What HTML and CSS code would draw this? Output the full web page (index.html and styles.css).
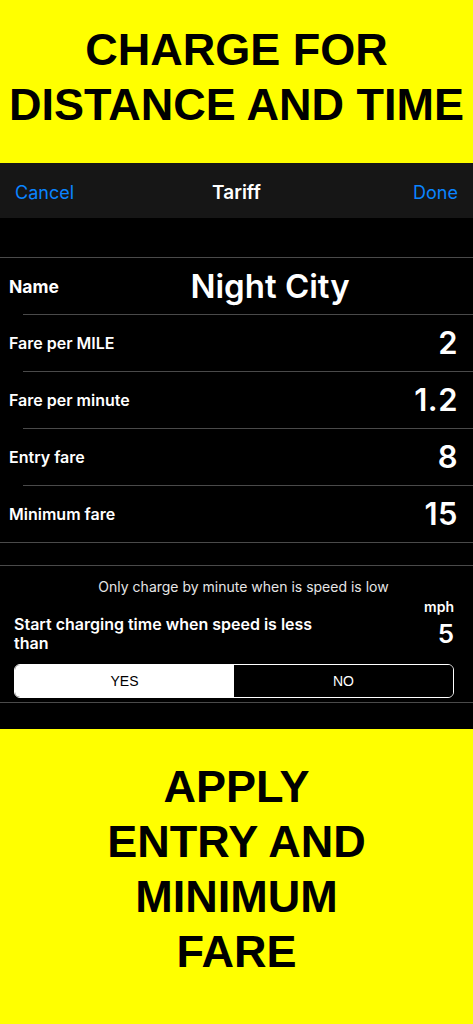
FILE: index.html
```html
<!DOCTYPE html>
<html lang="en">
<head>
    <meta charset="UTF-8">
    <meta name="viewport" content="width=device-width, initial-scale=1.0">
    <title>Tariff</title>
    <link rel="stylesheet" href="styles.css">
</head>
<body>
    <header class="banner banner-top">
        <h1>CHARGE FOR<br>DISTANCE AND TIME</h1>
    </header>

    <div class="screen">
        <nav class="navbar">
            <a class="nav-btn" href="#">Cancel</a>
            <span class="nav-title">Tariff</span>
            <a class="nav-btn nav-done" href="#">Done</a>
        </nav>

        <div class="table">
            <div class="row row-name">
                <span class="label">Name</span>
                <span class="name-value">Night City</span>
            </div>
            <div class="row">
                <span class="label">Fare per MILE</span>
                <span class="value">2</span>
            </div>
            <div class="row">
                <span class="label">Fare per minute</span>
                <span class="value">1.2</span>
            </div>
            <div class="row">
                <span class="label">Entry fare</span>
                <span class="value">8</span>
            </div>
            <div class="row">
                <span class="label">Minimum fare</span>
                <span class="value">15</span>
            </div>
        </div>

        <div class="speed">
            <p class="hint">Only charge by minute when is speed is low</p>
            <div class="speed-row">
                <span class="speed-label">Start charging time when speed is less than</span>
                <div class="speed-value">
                    <span class="unit">mph</span>
                    <span class="number">5</span>
                </div>
            </div>
            <div class="segmented">
                <button class="seg active">YES</button>
                <button class="seg">NO</button>
            </div>
        </div>
    </div>

    <footer class="banner banner-bottom">
        <h2>APPLY<br>ENTRY AND<br>MINIMUM<br>FARE</h2>
    </footer>
</body>
</html>
```

FILE: styles.css
```css
body {
    margin: 0;
    padding: 0;
    background-color: #000;
    font-family: Inter, "Noto Sans", sans-serif;
    color: #fff;
}
.banner {
    background-color: #ffff00;
    color: #000;
    text-align: center;
    font-family: "Liberation Sans", Arial, sans-serif;
    box-sizing: border-box;
}
.banner h1, .banner h2 {
    margin: 0;
    font-size: 45px;
    line-height: 55px;
    font-weight: bold;
}
.banner-top {
    height: 163px;
    padding-top: 22px;
}
.banner-bottom {
    height: 295px;
    padding-top: 30px;
}
.screen {
    padding-bottom: 26px;
}
.navbar {
    height: 55px;
    box-sizing: border-box;
    padding: 4px 15px 0;
    background-color: #161616;
    display: grid;
    grid-template-columns: 1fr auto 1fr;
    align-items: center;
}
.nav-btn {
    color: #0a84ff;
    text-decoration: none;
    font-size: 18px;
}
.nav-done {
    justify-self: end;
}
.nav-title {
    font-size: 19px;
    font-weight: 600;
}
.table {
    margin-top: 39px;
    border-top: 1px solid #4a4a4a;
    border-bottom: 1px solid #4a4a4a;
}
.row {
    height: 57px;
    display: flex;
    align-items: center;
    justify-content: space-between;
    padding: 0 15px 0 9px;
    background: linear-gradient(#4a4a4a, #4a4a4a) no-repeat 23px 0 / calc(100% - 23px) 1px;
}
.row-name {
    height: 56px;
    background: none;
}
.label {
    font-size: 16px;
    font-weight: 600;
}
.row-name .label {
    width: 73px;
    flex: none;
    font-size: 17.5px;
    font-weight: 700;
}
.name-value {
    flex: 1;
    text-align: center;
    font-size: 33px;
    font-weight: 600;
}
.value {
    font-size: 31px;
    font-weight: 600;
    letter-spacing: 0.5px;
}
.speed {
    margin-top: 22px;
    border-top: 1px solid #4a4a4a;
    border-bottom: 1px solid #4a4a4a;
    padding: 0 19px 4px 14px;
}
.hint {
    margin: 12px -19px 0 0;
    text-align: center;
    font-size: 14px;
    line-height: 17px;
    color: #e6e6e6;
}
.speed-row {
    display: flex;
    justify-content: space-between;
    align-items: flex-end;
    margin-top: 3px;
}
.speed-label {
    width: 320px;
    font-size: 16px;
    font-weight: 600;
    line-height: 19px;
    margin-bottom: -4px;
}
.speed-value {
    display: flex;
    flex-direction: column;
    align-items: flex-end;
}
.unit {
    font-size: 14px;
    font-weight: 600;
    line-height: 17px;
}
.number {
    margin-top: 4px;
    font-size: 26px;
    font-weight: 600;
    line-height: 30px;
}
.segmented {
    display: flex;
    margin-top: 15px;
    height: 34px;
    border: 1px solid #fff;
    border-radius: 6px;
    overflow: hidden;
    box-sizing: border-box;
}
.seg {
    flex: 1;
    border: none;
    background-color: #000;
    color: #fff;
    font-family: "Liberation Sans", Arial, sans-serif;
    font-size: 14px;
    padding: 0;
}
.seg.active {
    background-color: #fff;
    color: #000;
}
```
